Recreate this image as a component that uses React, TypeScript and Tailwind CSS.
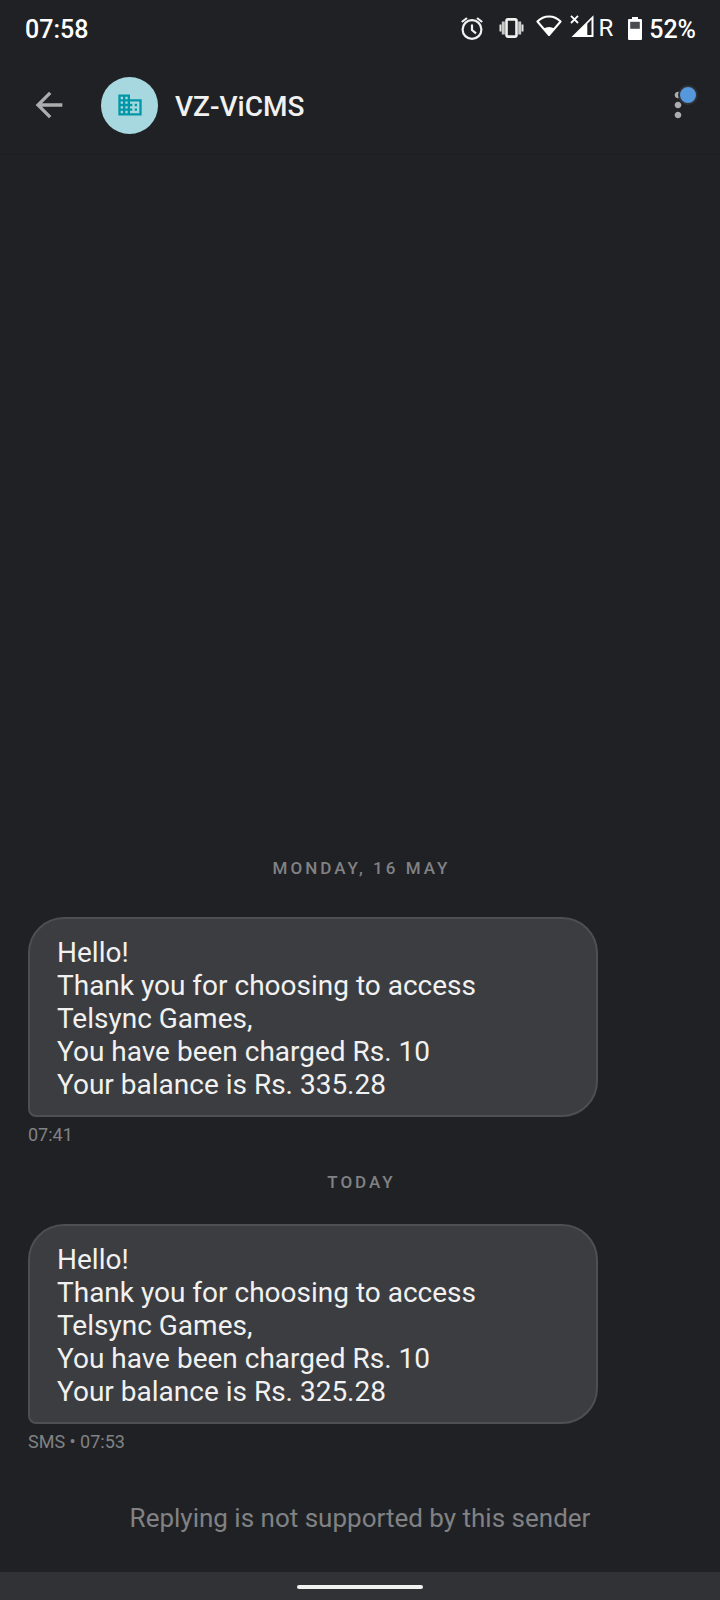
import { MdArrowBack, MdBusiness, MdMoreVert } from 'react-icons/md';

const conversation = [
	{
		id: 1,
		day: 'Monday, 16 May',
		lines: [
			'Hello!',
			'Thank you for choosing to access',
			'Telsync Games,',
			'You have been charged Rs. 10',
			'Your balance is Rs. 335.28',
		],
		meta: '07:41',
	},
	{
		id: 2,
		day: 'Today',
		lines: [
			'Hello!',
			'Thank you for choosing to access',
			'Telsync Games,',
			'You have been charged Rs. 10',
			'Your balance is Rs. 325.28',
		],
		meta: 'SMS • 07:53',
	},
];

function AlarmIcon() {
	return (
		<svg width="22" height="24" viewBox="0 0 22 24" fill="none" stroke="#f1f1f1" strokeWidth="2.2">
			<circle cx="11" cy="13.5" r="9.4" />
			<path d="M11 8.5V14l4 3.4M.8 6 6 2M21.200 6 16 2" />
		</svg>
	);
}

function VibrateIcon() {
	return (
		<svg width="25" height="20" viewBox="0 0 25 20" fill="none">
			<rect x="7.500" y="1.4" width="10" height="17.2" rx="1.5" stroke="#f1f1f1" strokeWidth="2.6" />
			<path d="M4.300 3.500v13M20.700 3.500v13" stroke="#c8c8c9" strokeWidth="3" />
			<path d="M1.500 6.500v7M23.500 6.500v7" stroke="#e4e4e4" strokeWidth="2" />
		</svg>
	);
}

function WifiIcon() {
	return (
		<svg width="26" height="22" viewBox="0 0 26 22">
			<path
				d="M1.400 6.500C8 -.3 18 -.3 24.600 6.500L13 20Z"
				fill="none"
				stroke="#fff"
				strokeWidth="2"
				strokeLinejoin="round"
			/>
			<path d="M7.500 13.500C11 11.500 15 11.500 18.500 13.500L13 21Z" fill="#fff" />
		</svg>
	);
}

function SignalIcon() {
	return (
		<svg width="24" height="22" viewBox="0 0 24 22">
			<path d="M1 .8 8 8M8 .8 1 8" stroke="#fff" strokeWidth="1.8" />
			<path d="M1.500 22 23.500 .3V22Z" fill="#fff" />
			<path d="M17.300 8.800 21.500 4.600v15.400h-4.200Z" fill="#202124" />
		</svg>
	);
}

function BatteryIcon() {
	return (
		<svg width="14" height="23" viewBox="0 0 14 23">
			<path d="M4 0h6v2h3a1 1 0 0 1 1 1v19a1 1 0 0 1-1 1H1a1 1 0 0 1-1-1V3a1 1 0 0 1 1-1h3Z" fill="#fff" />
			<path d="M2.200 4.800h9.600v7h-9.600Z" fill="#4a4b4e" />
		</svg>
	);
}

function StatusBar() {
	return (
		<div className="flex h-14 items-center justify-between pl-[25px] pr-6 text-[25px]/8 font-medium text-white">
			<span className="pt-1">07:58</span>
			<div className="flex items-center">
				<AlarmIcon />
				<div className="ml-4 flex">
					<VibrateIcon />
				</div>
				<div className="ml-3 flex pb-1">
					<WifiIcon />
				</div>
				<div className="ml-2 flex items-center gap-1">
					<div className="pb-1">
						<SignalIcon />
					</div>
					<span className="text-2xl font-normal">R</span>
				</div>
				<div className="ml-[15px] flex items-center gap-[7px]">
					<BatteryIcon />
					<span className="pt-1">52%</span>
				</div>
			</div>
		</div>
	);
}

function Header() {
	return (
		<header className="flex h-[99px] items-center border-b-2 border-[#1e1f22] pt-px pl-[29px] pr-[22px]">
			<button type="button" aria-label="Back" className="text-[#acadae]">
				<MdArrowBack className="size-10" />
			</button>
			<div className="ml-8 flex size-[57px] items-center justify-center rounded-full bg-[#a8d8df] text-[#0097a7]">
				<MdBusiness className="size-7" />
			</div>
			<h1 className="ml-[17px] flex-1 pt-1 text-[28px] font-medium text-[#f1f1f1]">VZ-ViCMS</h1>
			<button type="button" aria-label="More options" className="relative text-[#acadae]">
				<MdMoreVert className="size-10" />
				<span className="absolute top-0 right-0 size-5 rounded-full border-2 border-[#303134] bg-[#5598dc]" />
			</button>
		</header>
	);
}

export default function App() {
	return (
		<div className="flex min-h-screen flex-col bg-[#202124] font-[Roboto,sans-serif]">
			<StatusBar />
			<Header />

			<main className="flex flex-1 flex-col justify-end px-7">
				{conversation.map((message) => (
					<section key={message.id} className="group">
						<h2 className="pt-[21px] pb-[30px] pl-[3px] text-center text-[17px]/6 font-medium uppercase tracking-[3px] text-[#818284] group-first:pb-[37px]">
							{message.day}
						</h2>
						<div className="w-[570px] max-w-full rounded-[36px] rounded-bl-lg border-2 border-[#4e4f51] bg-[#3c3d40] px-[27px] pt-[17px] pb-[14px] text-[28px]/[33px] text-[#f1f1f1]">
							{message.lines.map((line) => (
								<p key={line}>{line}</p>
							))}
						</div>
						<p className="mt-1 text-lg/7 text-[#818284]">{message.meta}</p>
					</section>
				))}
			</main>

			<footer>
				<p className="pt-[46px] pb-[38px] text-center text-[26px]/8 text-[#818284]">
					Replying is not supported by this sender
				</p>
				<div className="flex h-7 items-center justify-center bg-[#313235] pt-[2px]">
					<div className="h-1 w-[126px] rounded-full bg-[#f1f1ef]" />
				</div>
			</footer>
		</div>
	);
}
